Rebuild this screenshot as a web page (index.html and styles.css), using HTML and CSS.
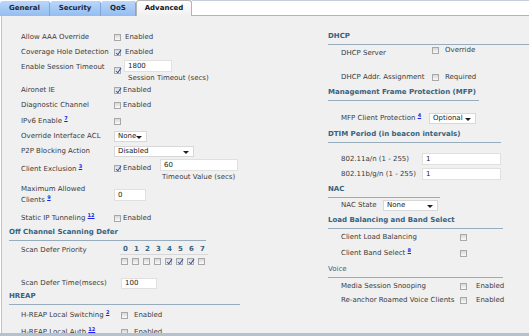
FILE: index.html
```html
<!DOCTYPE html>
<html lang="en">
<head>
  <meta charset="UTF-8">
  <title>WLAN - Advanced</title>
  <link rel="stylesheet" href="styles.css">
</head>
<body>

<div class="tabs">
  <div class="tab tab-general">General</div>
  <div class="tab tab-security">Security</div>
  <div class="tab tab-qos">QoS</div>
  <div class="tab tab-advanced active">Advanced</div>
  <div class="tab-fill"></div>
</div>

<div class="panel">
  <div class="col-left">
    <div class="row h15"><span class="lbl">Allow AAA Override</span><span class="cb"></span><span class="opt">Enabled</span></div>
    <div class="row h14"><span class="lbl">Coverage Hole Detection</span><span class="cb on"></span><span class="opt">Enabled</span></div>
    <div class="row top h24">
      <span class="lbl mt4">Enable Session Timeout</span>
      <span class="cb on mt8"></span>
      <div class="field session"><span class="inp">1800</span><span class="cap">Session Timeout (secs)</span></div>
    </div>
    <div class="row h14"><span class="lbl">Aironet IE</span><span class="cb on"></span><span class="opt tight">Enabled</span></div>
    <div class="row h16"><span class="lbl">Diagnostic Channel</span><span class="cb"></span><span class="opt tight">Enabled</span></div>
    <div class="row h16"><span class="lbl">IPv6 Enable <a class="note">7</a></span><span class="cb"></span></div>
    <div class="row h15"><span class="lbl">Override Interface ACL</span><span class="sel sel-acl">None</span></div>
    <div class="row h15"><span class="lbl">P2P Blocking Action</span><span class="sel sel-p2p">Disabled</span></div>
    <div class="row top h25">
      <span class="lbl mt6">Client Exclusion <a class="note">3</a></span>
      <span class="chk mt5"><span class="cb on"></span><span class="opt tight">Enabled</span></span>
      <div class="field excl"><span class="inp">60</span><span class="cap">Timeout Value (secs)</span></div>
    </div>
    <div class="row top h26">
      <span class="lbl two">Maximum Allowed<br>Clients <a class="note">9</a></span>
      <span class="inp inp-clients mt5">0</span>
    </div>
    <div class="row h16"><span class="lbl">Static IP Tunneling <a class="note">12</a></span><span class="cb"></span><span class="opt tight">Enabled</span></div>

    <div class="sec sec-scan">Off Channel Scanning Defer</div>
    <div class="row top h25">
      <span class="lbl lbl-prio mt5">Scan Defer Priority</span>
      <div class="prio">
        <span class="num">0</span><span class="num">1</span><span class="num">2</span><span class="num">3</span>
        <span class="num">4</span><span class="num">5</span><span class="num">6</span><span class="num">7</span>
        <span class="box"><span class="cb"></span></span><span class="box"><span class="cb"></span></span>
        <span class="box"><span class="cb"></span></span><span class="box"><span class="cb"></span></span>
        <span class="box"><span class="cb on"></span></span><span class="box"><span class="cb on"></span></span>
        <span class="box"><span class="cb on"></span></span><span class="box"><span class="cb"></span></span>
      </div>
    </div>
    <div class="row h14 mt10"><span class="lbl lbl-wide">Scan Defer Time(msecs)</span><span class="inp inp-time">100</span></div>

    <div class="sec sec-hreap">HREAP</div>
    <div class="row h20"><span class="lbl lbl-wide">H-REAP Local Switching <a class="note">2</a></span><span class="cb"></span><span class="opt wide">Enabled</span></div>
    <div class="row h14"><span class="lbl lbl-wide">H-REAP Local Auth <a class="note">12</a></span><span class="cb"></span><span class="opt wide">Enabled</span></div>
  </div>

  <div class="col-right">
    <div class="sec sec-dhcp">DHCP</div>
    <div class="row h16">
      <span class="lbl lbl-dhcp">DHCP Server</span>
      <span class="chk chk-up"><span class="cb"></span><span class="opt wide">Override</span></span>
    </div>
    <div class="row h16 mt8">
      <span class="lbl lbl-dhcp">DHCP Addr. Assignment</span>
      <span class="cb"></span><span class="opt wide">Required</span>
    </div>

    <div class="sec sec-mfp">Management Frame Protection (MFP)</div>
    <div class="row h16 mt9"><span class="lbl lbl-mfp">MFP Client Protection <a class="note">4</a></span><span class="sel sel-mfp">Optional</span></div>

    <div class="sec sec-dtim">DTIM Period (in beacon intervals)</div>
    <div class="row h14 mt9"><span class="lbl lbl-dtim">802.11a/n (1 - 255)</span><span class="inp inp-dtim">1</span></div>
    <div class="row h14 mt1"><span class="lbl lbl-dtim">802.11b/g/n (1 - 255)</span><span class="inp inp-dtim">1</span></div>

    <div class="sec sec-nac">NAC</div>
    <div class="row h14"><span class="lbl lbl-nac">NAC State</span><span class="sel sel-nac">None</span></div>

    <div class="sec sec-lb">Load Balancing and Band Select</div>
    <div class="row h16"><span class="lbl lbl-lb">Client Load Balancing</span><span class="cb"></span></div>
    <div class="row h16"><span class="lbl lbl-lb">Client Band Select <a class="note">8</a></span><span class="cb"></span></div>

    <div class="sec sec-voice">Voice</div>
    <div class="row h16"><span class="lbl lbl-lb">Media Session Snooping</span><span class="cb"></span><span class="opt voice">Enabled</span></div>
    <div class="row h13"><span class="lbl lbl-lb">Re-anchor Roamed Voice Clients</span><span class="cb"></span><span class="opt voice">Enabled</span></div>
  </div>
</div>

<div class="bottom-bar"></div>

</body>
</html>
```

FILE: styles.css
```css
* {
  box-sizing: border-box;
}
body {
  margin: 0;
  width: 529px;
  height: 336px;
  overflow: hidden;
  background: #fff;
  font-family: "DejaVu Sans", Verdana, sans-serif;
  font-size: 7px;
  line-height: 9px;
  color: #3b3b3b;
}

/* tabs */
.tabs {
  display: flex;
  align-items: flex-end;
  height: 16px;
}
.tab {
  height: 15px;
  line-height: 15px;
  font-weight: bold;
  color: #1c2735;
  text-align: center;
  background: linear-gradient(#bad7fa, #93bdf0);
  border-right: 1px solid #7fa6d6;
  border-radius: 3px 3px 0 0;
}
.tab-general { width: 50px; }
.tab-security { width: 51px; }
.tab-qos { width: 35px; }
.tab-advanced { width: 56px; }
.tab.active {
  height: 16px;
  background: linear-gradient(#fff, #f0f0f0);
  border: 1px solid #b4b4b4;
  border-bottom: none;
  color: #151515;
}
.tab-fill {
  flex: 1;
  height: 16px;
  background: #fff;
  border-top: 1px solid #c6cfdb;
  border-bottom: 1px solid #b4b4b4;
}

/* panel */
.panel {
  display: flex;
  height: 317px;
  margin-left: 1px;
  border-left: 1px solid #c2c2c2;
  background: #f0f0f0;
  overflow: hidden;
}
.col-left {
  flex: none;
  width: 236px;
  margin-left: 7px;
  padding-top: 14px;
}
.col-right {
  flex: 1;
  margin-left: 83px;
  padding-top: 16px;
}
.bottom-bar {
  height: 3px;
  background: #b6c1cf;
}

/* rows */
.row {
  display: flex;
  align-items: center;
}
.row.top { align-items: flex-start; }
.h13 { height: 13px; }
.h14 { height: 14px; }
.h15 { height: 15px; }
.h16 { height: 16px; }
.h20 { height: 20px; }
.h24 { height: 24px; }
.h25 { height: 25px; }
.h26 { height: 26px; }
.mt1 { margin-top: 1px; }
.mt4 { margin-top: 4px; }
.mt5 { margin-top: 5px; }
.mt6 { margin-top: 6px; }
.mt8 { margin-top: 8px; }
.mt9 { margin-top: 9px; }
.mt10 { margin-top: 10px; }

.lbl {
  flex: none;
  width: 105px;
  padding-left: 12px;
  white-space: nowrap;
}
.lbl.two { line-height: 11px; }
.lbl-prio { width: 111px; }
.lbl-wide { width: 112px; }
.col-right .lbl { padding-left: 13px; }
.lbl-dhcp { width: 104px; }
.lbl-mfp { width: 101px; }
.lbl-dtim { width: 94px; }
.lbl-nac { width: 55px; }
.lbl-lb { width: 132px; }

.note {
  font-size: 5px;
  font-weight: bold;
  color: #1b1bf0;
  text-decoration: underline;
  vertical-align: 3px;
  line-height: 0;
}

/* checkboxes */
.cb {
  flex: none;
  display: block;
  position: relative;
  width: 7px;
  height: 7px;
  border: 1px solid #a8a8a8;
  background: linear-gradient(#d8d8d8, #fafafa);
}
.cb.on::after {
  content: "";
  position: absolute;
  left: 2px;
  top: -1px;
  width: 2px;
  height: 5px;
  border: solid #3352aa;
  border-width: 0 1px 1px 0;
  transform: rotate(35deg);
}
.chk {
  flex: none;
  display: flex;
  align-items: center;
  width: 46px;
}
.chk-up {
  align-self: flex-start;
  margin-top: 1px;
  width: auto;
}
.opt { margin-left: 4px; }
.opt.tight { margin-left: 2px; }
.opt.wide { margin-left: 6px; }
.opt.voice { margin-left: 9px; }

/* inputs */
.inp {
  display: block;
  flex: none;
  height: 12px;
  line-height: 10px;
  padding-left: 3px;
  background: #fff;
  border: 1px solid #e0e0e0;
  color: #222;
}
.field {
  display: flex;
  flex-direction: column;
}
.field .cap { margin-top: 2px; }
.session { margin-left: 3px; margin-top: 1px; }
.session .inp { width: 48px; }
.session .cap { padding-left: 4px; }
.excl .inp { width: 78px; }
.excl .cap { padding-left: 2px; }
.inp-clients { width: 32px; }
.inp-time { width: 36px; height: 11px; line-height: 9px; }
.inp-dtim { width: 79px; }

.sel {
  flex: none;
  position: relative;
  height: 11px;
  line-height: 9px;
  padding-left: 3px;
  background: #fff;
  border: 1px solid #d8d8d8;
  color: #222;
}
.sel::after {
  content: "";
  position: absolute;
  right: 4px;
  top: 4px;
  border: 3px solid transparent;
  border-top-color: #1e1e1e;
  border-bottom: 0;
}
.sel-acl { width: 33px; }
.sel-p2p { width: 80px; }
.sel-mfp { width: 47px; }
.sel-nac { width: 55px; }

/* section headings */
.sec {
  font-weight: bold;
  color: #36627f;
  line-height: 9px;
  padding-bottom: 3px;
  border-bottom: 1px solid #97adbd;
  white-space: nowrap;
}
.sec-scan { width: 197px; margin-top: 2px; }
.sec-hreap { width: 231px; margin-top: 2px; }
.sec-dhcp { width: 201px; }
.sec-mfp { width: 151px; margin-top: 3px; }
.sec-dtim { width: 173px; margin-top: 4px; }
.sec-nac { width: 112px; margin-top: 4px; }
.sec-lb { width: 175px; margin-top: 4px; }
.sec-voice { width: 175px; margin-top: 4px; font-weight: normal; }

/* scan priority grid */
.prio {
  display: grid;
  grid-template-columns: repeat(8, 11px);
  margin-top: 4px;
}
.prio .num {
  height: 10px;
  padding-left: 3px;
  font-weight: bold;
  color: #36627f;
  border-bottom: 1px solid #d8d8d8;
}
.prio .box {
  padding: 3px 0 0 1px;
}
```
